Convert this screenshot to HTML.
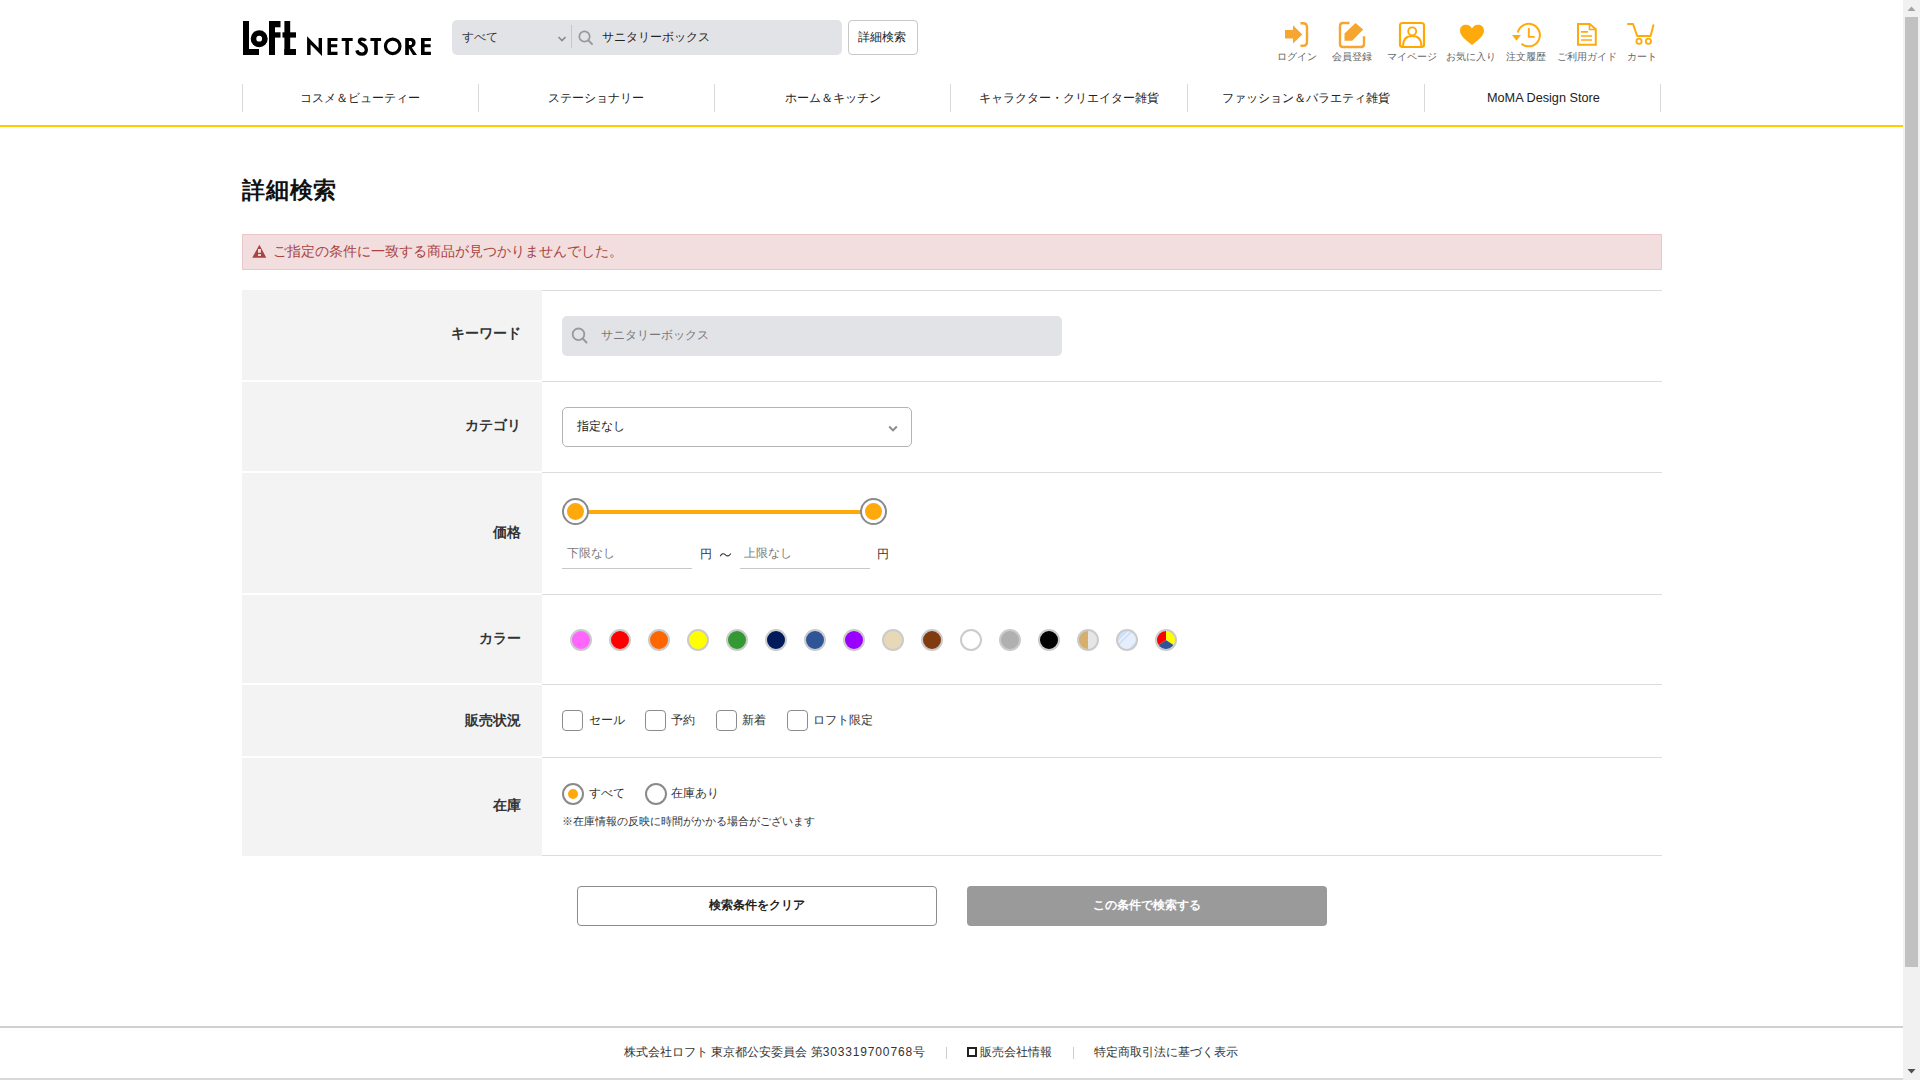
<!DOCTYPE html>
<html lang="ja">
<head>
<meta charset="utf-8">
<title>詳細検索 | ロフト公式通販サイト</title>
<style>
*{box-sizing:border-box;margin:0;padding:0}
html,body{width:1920px;height:1080px;overflow:hidden;background:#fff}
body{position:relative;font-family:"Liberation Sans",sans-serif;color:#222;font-size:13px;line-height:1}
.a{position:absolute}
.t{position:absolute;white-space:nowrap;line-height:1}
/* scrollbar */
#sb{left:1903px;top:0;width:17px;height:1080px;background:#f1f1f1}
#sbthumb{left:1905px;top:17px;width:13px;height:950px;background:#c1c1c1}
/* header */
.sbar{left:452px;top:20px;width:390px;height:35px;background:#e2e3e7;border-radius:5px}
.dbtn{left:848px;top:20px;width:70px;height:35px;border:1px solid #c8c8c8;border-radius:4px;background:#fff}
.ic{position:absolute;top:20px}
.icl{position:absolute;top:52px;font-size:10px;color:#666;white-space:nowrap;line-height:1}
.nsep{position:absolute;top:84px;width:1px;height:28px;background:#d9d9d9}
.nav{position:absolute;top:92px;font-size:12px;color:#222;white-space:nowrap;line-height:1}
#yl{left:0;top:125px;width:1903px;height:2px;background:#ffcc00}
/* form */
.th{position:absolute;left:242px;width:300px;background:#f3f3f3}
.ln{position:absolute;left:542px;width:1120px;height:1px;background:#dcdcdc}
.lab{position:absolute;font-size:14px;font-weight:bold;color:#333;white-space:nowrap;line-height:1;right:1399px}
.sw{position:absolute;top:629px;width:22px;height:22px;border-radius:50%;border:2px solid #cbcbcb}
.cb{position:absolute;top:710px;width:21px;height:21px;border:1.5px solid #8c8c8c;border-radius:4px;background:#fff}
.cbt{position:absolute;top:714px;font-size:12px;color:#333;white-space:nowrap;line-height:1}
</style>
</head>
<body>
<!-- scrollbar -->
<div id="sb" class="a"></div>
<div id="sbthumb" class="a"></div>
<svg class="a" style="left:1903px;top:0" width="17" height="17"><path d="M4.5 11 L8.5 6.5 L12.5 11 Z" fill="#a3a3a3"/></svg>
<svg class="a" style="left:1903px;top:1063px" width="17" height="17"><path d="M4.5 6 L8.5 10.5 L12.5 6 Z" fill="#505050"/></svg>

<!-- logo -->
<svg class="a" style="left:240px;top:18px" width="60" height="40" viewBox="240 18 60 40">
  <rect x="243" y="21" width="6" height="34" fill="#000"/>
  <rect x="243" y="49" width="16" height="6" fill="#000"/>
  <circle cx="259.2" cy="38.7" r="5.7" fill="none" stroke="#000" stroke-width="5.6"/>
  <rect x="269" y="21" width="6" height="34" fill="#000"/>
  <rect x="269" y="21" width="11.5" height="6.3" fill="#000"/>
  <rect x="269" y="32.3" width="11.5" height="5.3" fill="#000"/>
  <rect x="284.4" y="21" width="5.8" height="34" fill="#000"/>
  <rect x="282.5" y="32.3" width="13.5" height="5.3" fill="#000"/>
  <rect x="284.4" y="49" width="11.6" height="6" fill="#000"/>
</svg>
<svg class="a" style="left:300px;top:30px" width="140" height="30" viewBox="300 30 140 30">
  <g fill="#000">
  <path d="M307.1 36.2 L318.6 48 V37.9 H322 V55.9 L310.6 44.6 V54.9 H307.1 Z"/>
  <path d="M327.5 37.9 H337.5 V41 H331 V44.2 H337.2 V47.2 H331 V51.7 H337.5 V54.9 H327.5 Z"/>
  <path d="M341.7 37.9 H352.7 V41 H348.9 V54.9 H345.4 V41 H341.7 Z"/>
  <path d="M370.4 37.9 H381.1 V41 H377.8 V54.9 H374.2 V41 H370.4 Z"/>
  <path d="M421 37.9 H430.9 V41 H424.6 V44.2 H430.6 V47.2 H424.6 V51.7 H430.9 V54.9 H421 Z"/>
  <path d="M405.2 37.9 H410.5 C414 37.9 415.6 40 415.6 42.6 C415.6 45.2 414.2 47 411.8 47.4 L417 54.9 H413 L408.9 48.3 V54.9 H405.2 Z M408.9 41 V45 H410.3 C411.6 45 412.1 44 412.1 43 C412.1 42 411.6 41 410.3 41 Z" fill-rule="evenodd"/>
  </g>
  <circle cx="392.7" cy="46.35" r="7.25" fill="none" stroke="#000" stroke-width="3.2"/>
  <path d="M365.6 40.8 C364.8 39.3 363.6 39.1 362 39.1 C360.2 39.1 359.4 40.3 359.4 41.4 C359.4 42.7 360.4 43.3 362.6 44.4 C365.3 45.7 366.3 47.2 366.3 49.8 C366.3 52.7 364.3 54.2 361.7 54.2 C358.9 54.2 357.3 52.6 356.9 50.4" fill="none" stroke="#000" stroke-width="3.3"/>
</svg>

<!-- search bar -->
<div class="a sbar"></div>
<div class="t" style="left:462px;top:30.5px;font-size:12px;color:#333">すべて</div>
<svg class="a" style="left:556px;top:34px" width="12" height="10"><path d="M2.5 3 L6 6.5 L9.5 3" fill="none" stroke="#888" stroke-width="1.6"/></svg>
<div class="a" style="left:571px;top:25px;width:1px;height:23px;background:#c6c7cb"></div>
<svg class="a" style="left:577px;top:29px" width="18" height="18"><circle cx="7.5" cy="7.5" r="5.2" fill="none" stroke="#999" stroke-width="1.7"/><path d="M11.3 11.3 L15 15" stroke="#999" stroke-width="1.9" stroke-linecap="round"/></svg>
<div class="t" style="left:602px;top:31px;font-size:12.2px;color:#222">サニタリーボックス</div>
<div class="a dbtn"></div>
<div class="t" style="left:858px;top:31px;font-size:12px;color:#222">詳細検索</div>

<!-- header icons -->
<svg class="ic" style="left:1280px" width="380" height="30" viewBox="1280 20 380 30">
  <!-- login -->
  <path d="M1285 30 H1293 V25.3 L1302.3 34.5 L1293 43.6 V38.4 H1285 Z" fill="#f7a531"/>
  <path d="M1300.5 23.2 H1303 Q1307 23.2 1307 27.2 V41.8 Q1307 45.8 1303 45.8 H1300.5" fill="none" stroke="#f7a531" stroke-width="2.4"/>
  <!-- member -->
  <path d="M1349.5 23 H1343 Q1340 23 1340 26 V44 Q1340 47 1343 47 H1361 Q1364 47 1364 44 V36.3" fill="none" stroke="#f7a531" stroke-width="2.4"/>
  <path d="M1344.5 33.5 L1355.5 23 L1363.2 29.6 L1352.2 40.7 H1344.5 Z" fill="#f7a531"/>
  <!-- mypage -->
  <rect x="1400" y="23" width="24" height="24" rx="2.5" fill="none" stroke="#ffa800" stroke-width="2.2"/>
  <circle cx="1412.2" cy="31.3" r="4" fill="none" stroke="#ffa800" stroke-width="1.8"/>
  <path d="M1403 46.5 Q1403 36 1412.2 36 Q1421.5 36 1421.5 46.5" fill="none" stroke="#ffa800" stroke-width="1.8"/>
  <!-- heart -->
  <path d="M1472 45 C1466 40 1460 36 1460 30.5 C1460 26.8 1462.8 24.8 1466 24.8 C1468.8 24.8 1471 26.5 1472 28.5 C1473 26.5 1475.2 24.8 1478 24.8 C1481.2 24.8 1484 26.8 1484 30.5 C1484 36 1478 40 1472 45 Z" fill="#ffaa0c"/>
  <!-- history -->
  <path d="M1517.8 32.5 A11.2 11.2 0 1 1 1521.5 43.7" fill="none" stroke="#ffaa0c" stroke-width="2"/>
  <path d="M1512 35 H1521 L1516.5 40.8 Z" fill="#ffaa0c"/>
  <path d="M1528.8 28 V36.9 H1534.7" fill="none" stroke="#ffaa0c" stroke-width="1.9"/>
  <!-- guide -->
  <path d="M1578 24 H1589.7 L1595.8 29.2 V44.8 H1578 Z" fill="none" stroke="#ffaa0c" stroke-width="2"/>
  <path d="M1589.5 24 V29.5 H1595.5" fill="none" stroke="#ffaa0c" stroke-width="1.6"/>
  <path d="M1581 31.9 H1588 M1581 36 H1592 M1581 40 H1592" stroke="#ffaa0c" stroke-width="1.6"/>
  <!-- cart -->
  <path d="M1628 24 H1633 L1637.2 36 H1650.6 L1653.4 25.3" fill="none" stroke="#ffaa0c" stroke-width="2" stroke-linejoin="round" stroke-linecap="round"/>
  <circle cx="1639" cy="41.3" r="2.6" fill="none" stroke="#ffaa0c" stroke-width="1.8"/>
  <circle cx="1648.4" cy="41.3" r="2.6" fill="none" stroke="#ffaa0c" stroke-width="1.8"/>
</svg>
<div class="icl" style="left:1277px">ログイン</div>
<div class="icl" style="left:1332px">会員登録</div>
<div class="icl" style="left:1387px">マイページ</div>
<div class="icl" style="left:1446px">お気に入り</div>
<div class="icl" style="left:1506px">注文履歴</div>
<div class="icl" style="left:1557px">ご利用ガイド</div>
<div class="icl" style="left:1627px">カート</div>

<!-- nav -->
<div class="nsep" style="left:242px"></div>
<div class="nsep" style="left:478px"></div>
<div class="nsep" style="left:714px"></div>
<div class="nsep" style="left:950px"></div>
<div class="nsep" style="left:1187px"></div>
<div class="nsep" style="left:1424px"></div>
<div class="nsep" style="left:1660px"></div>
<div class="nav" style="left:300px">コスメ＆ビューティー</div>
<div class="nav" style="left:548px">ステーショナリー</div>
<div class="nav" style="left:785px">ホーム＆キッチン</div>
<div class="nav" style="left:979px">キャラクター・クリエイター雑貨</div>
<div class="nav" style="left:1222px">ファッション＆バラエティ雑貨</div>
<div class="nav" style="left:1487px;font-size:12.7px;top:92px">MoMA Design Store</div>
<div id="yl" class="a"></div>

<!-- title -->
<div class="t" style="left:242px;top:179px;font-size:23px;font-weight:bold;letter-spacing:0.8px;color:#111">詳細検索</div>

<!-- alert -->
<div class="a" style="left:242px;top:234px;width:1420px;height:36px;background:#f2dede;border:1px solid #ebc6cb"></div>
<svg class="a" style="left:251px;top:243px" width="17" height="17"><path d="M8.4 1.8 L15.3 14.7 H1.2 Z" fill="#a94442"/><rect x="7" y="6" width="2.9" height="3.8" fill="#f2dede"/><rect x="7" y="11.1" width="2.9" height="1.9" fill="#f2dede"/></svg>
<div class="t" style="left:273px;top:244px;font-size:14px;color:#a94442">ご指定の条件に一致する商品が見つかりませんでした。</div>

<!-- form table -->
<div class="th" style="top:290px;height:90px"></div>
<div class="th" style="top:382px;height:89px"></div>
<div class="th" style="top:473px;height:120px"></div>
<div class="th" style="top:595px;height:88px"></div>
<div class="th" style="top:685px;height:71px"></div>
<div class="th" style="top:758px;height:98px"></div>
<div class="ln" style="top:290px"></div>
<div class="ln" style="top:381px"></div>
<div class="ln" style="top:472px"></div>
<div class="ln" style="top:594px"></div>
<div class="ln" style="top:684px"></div>
<div class="ln" style="top:757px"></div>
<div class="ln" style="top:855px"></div>

<div class="lab" style="top:326px">キーワード</div>
<div class="lab" style="top:418px">カテゴリ</div>
<div class="lab" style="top:525px">価格</div>
<div class="lab" style="top:631px">カラー</div>
<div class="lab" style="top:713px">販売状況</div>
<div class="lab" style="top:798px">在庫</div>

<!-- keyword -->
<div class="a" style="left:562px;top:316px;width:500px;height:40px;background:#e2e3e7;border-radius:5px"></div>
<svg class="a" style="left:570px;top:326px" width="20" height="20"><circle cx="8.5" cy="8.3" r="5.8" fill="none" stroke="#999" stroke-width="1.8"/><path d="M12.7 12.5 L16.5 16.5" stroke="#999" stroke-width="2" stroke-linecap="round"/></svg>
<div class="t" style="left:601px;top:329px;font-size:12.2px;color:#777">サニタリーボックス</div>

<!-- category -->
<div class="a" style="left:562px;top:407px;width:350px;height:40px;border:1px solid #b3b3b3;border-radius:5px;background:#fff"></div>
<div class="t" style="left:577px;top:420px;font-size:12px;color:#222">指定なし</div>
<svg class="a" style="left:887px;top:422.5px" width="12" height="12"><path d="M2.2 3.5 L6 7.3 L9.8 3.5" fill="none" stroke="#8a8a8a" stroke-width="1.9"/></svg>

<!-- price slider -->
<div class="a" style="left:588px;top:510px;width:273px;height:4px;background:#ffa90a"></div>
<div class="a" style="left:562px;top:498px;width:27px;height:27px;border-radius:50%;border:2.2px solid #8a8a8a;background:#fff"></div>
<div class="a" style="left:567px;top:503px;width:17px;height:17px;border-radius:50%;background:#ffa90a"></div>
<div class="a" style="left:860px;top:498px;width:27px;height:27px;border-radius:50%;border:2.2px solid #8a8a8a;background:#fff"></div>
<div class="a" style="left:865px;top:503px;width:17px;height:17px;border-radius:50%;background:#ffa90a"></div>
<div class="t" style="left:567px;top:547px;font-size:12px;color:#777">下限なし</div>
<div class="a" style="left:562px;top:568px;width:130px;height:1px;background:#c8c8c8"></div>
<div class="t" style="left:700px;top:548px;font-size:12px;color:#333">円</div>
<svg class="a" style="left:719px;top:550px" width="14" height="10"><path d="M1.2 6.2 C2.8 3.2 4.8 3.2 6.5 4.8 C8.2 6.4 10.2 6.4 11.8 3.6" fill="none" stroke="#333" stroke-width="1.1"/></svg>
<div class="t" style="left:744px;top:547px;font-size:12px;color:#777">上限なし</div>
<div class="a" style="left:740px;top:568px;width:130px;height:1px;background:#c8c8c8"></div>
<div class="t" style="left:877px;top:548px;font-size:12px;color:#333">円</div>

<!-- colors -->
<div class="sw" style="left:570px;background:#ff66ff"></div>
<div class="sw" style="left:609px;background:#ff0000"></div>
<div class="sw" style="left:648px;background:#ff6600"></div>
<div class="sw" style="left:687px;background:#ffff00"></div>
<div class="sw" style="left:726px;background:#339933"></div>
<div class="sw" style="left:765px;background:#001a5c"></div>
<div class="sw" style="left:804px;background:#2f5597"></div>
<div class="sw" style="left:843px;background:#9900ff"></div>
<div class="sw" style="left:882px;background:#e8d8b8"></div>
<div class="sw" style="left:921px;background:#803b10"></div>
<div class="sw" style="left:960px;background:#ffffff"></div>
<div class="sw" style="left:999px;background:#b0b0b0"></div>
<div class="sw" style="left:1038px;background:#000000"></div>
<div class="sw" style="left:1077px;background:linear-gradient(90deg,#d6b06a 50%,#e6e6e6 50%)"></div>
<div class="sw" style="left:1116px;background:linear-gradient(135deg,#d0e2fb 0%,#d0e2fb 30%,#eaf2fd 30%,#eaf2fd 36%,#d0e2fb 36%,#d0e2fb 42%,#e4eefc 42%,#e4eefc 80%,#cfe1fa 80%)"></div>
<svg class="a" style="left:1155px;top:629px" width="22" height="22"><path d="M11 11 L11.00 1.50 A9.5 9.5 0 0 1 18.88 16.31 Z" fill="#ffff00"/><path d="M11 11 L18.88 16.31 A9.5 9.5 0 0 1 3.12 16.31 Z" fill="#2f5597"/><path d="M11 11 L3.12 16.31 A9.5 9.5 0 0 1 11.00 1.50 Z" fill="#ff0000"/><circle cx="11" cy="11" r="10" fill="none" stroke="#cbcbcb" stroke-width="2"/></svg>

<!-- sales status -->
<div class="cb" style="left:562px"></div>
<div class="cbt" style="left:589px">セール</div>
<div class="cb" style="left:645px"></div>
<div class="cbt" style="left:671px">予約</div>
<div class="cb" style="left:716px"></div>
<div class="cbt" style="left:742px">新着</div>
<div class="cb" style="left:787px"></div>
<div class="cbt" style="left:813px">ロフト限定</div>

<!-- stock -->
<div class="a" style="left:562px;top:783px;width:22px;height:22px;border-radius:50%;border:2.2px solid #8a8a8a;background:#fff"></div>
<div class="a" style="left:568px;top:789px;width:10px;height:10px;border-radius:50%;background:#ffa90a"></div>
<div class="t" style="left:589px;top:787px;font-size:12px;color:#333">すべて</div>
<div class="a" style="left:645px;top:783px;width:22px;height:22px;border-radius:50%;border:2.2px solid #8a8a8a;background:#fff"></div>
<div class="t" style="left:671px;top:787px;font-size:12px;color:#333">在庫あり</div>
<div class="t" style="left:562px;top:816px;font-size:11px;color:#333">※在庫情報の反映に時間がかかる場合がございます</div>

<!-- buttons -->
<div class="a" style="left:577px;top:886px;width:360px;height:40px;border:1px solid #8c8c8c;border-radius:4px;background:#fff"></div>
<div class="t" style="left:577px;top:899px;width:360px;text-align:center;font-size:12px;font-weight:bold;color:#222">検索条件をクリア</div>
<div class="a" style="left:967px;top:886px;width:360px;height:40px;border-radius:4px;background:#9a9a9a"></div>
<div class="t" style="left:967px;top:899px;width:360px;text-align:center;font-size:12px;font-weight:bold;color:#fff">この条件で検索する</div>

<!-- footer -->
<div class="a" style="left:0;top:1026px;width:1903px;height:2px;background:#d0d0d0"></div>
<div class="t" style="left:624px;top:1046px;font-size:12px;color:#333">株式会社ロフト 東京都公安委員会 第<span style="letter-spacing:0.85px">303319700768</span>号</div>
<div class="a" style="left:946px;top:1047px;width:1px;height:12px;background:#ccc"></div>
<div class="a" style="left:967px;top:1047px;width:10px;height:10px;border:2px solid #222"></div>
<div class="t" style="left:980px;top:1046px;font-size:12px;color:#333">販売会社情報</div>
<div class="a" style="left:1073px;top:1047px;width:1px;height:12px;background:#ccc"></div>
<div class="t" style="left:1094px;top:1046px;font-size:12px;color:#333">特定商取引法に基づく表示</div>
<div class="a" style="left:0;top:1078px;width:1903px;height:2px;background:#d8d8d8"></div>
</body>
</html>
